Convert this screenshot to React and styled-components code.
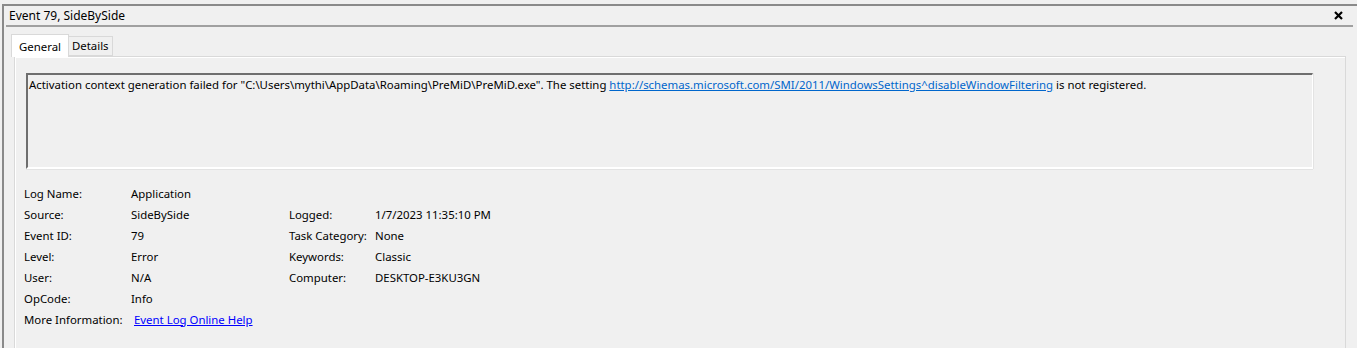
import React from "react";
import styled, { createGlobalStyle } from "styled-components";

const Global = createGlobalStyle`
  html, body {
    margin: 0;
    padding: 0;
    background: #f0f0f0;
    overflow: hidden;
  }
  body {
    font-family: "Segoe UI", "Noto Sans", "Liberation Sans", sans-serif;
    font-size: 11.4px;
    color: #000;
  }
`;

const Screen = styled.div`
  width: 1357px;
  height: 348px;
  padding: 4px 0 0 2px;
  box-sizing: border-box;
  background: #f0f0f0;
`;

const Window = styled.div`
  height: 100%;
  border-top: 2px solid #8a8a8a;
  border-left: 2px solid #8a8a8a;
  box-sizing: border-box;
`;

const TitleBar = styled.div`
  display: flex;
  align-items: center;
  justify-content: space-between;
  height: 19px;
  margin: 0 4px 0 2px;
  padding: 0 10px 0 3px;
  border-bottom: 2px solid #a0a0a0;
`;

const Title = styled.span`
  line-height: 16px;
  font-size: 12px;
`;

const Close = styled.svg`
  width: 9px;
  height: 9px;
`;

const Tabs = styled.div`
  display: flex;
  align-items: flex-end;
  height: 29px;
  padding-left: 7px;
`;

const Tab = styled.div`
  position: relative;
  height: ${(p) => (p.$active ? "23px" : "20px")};
  padding: ${(p) => (p.$active ? "1px 7px 0" : "0 3px")};
  margin-right: ${(p) => (p.$active ? "-1px" : "0")};
  display: flex;
  align-items: center;
  box-sizing: border-box;
  background: ${(p) => (p.$active ? "#fff" : "#f0f0f0")};
  border: 1px solid #d9d9d9;
  border-bottom: ${(p) => (p.$active ? "none" : "1px solid #d9d9d9")};
  z-index: ${(p) => (p.$active ? 1 : 0)};
  margin-bottom: ${(p) => (p.$active ? "-1px" : "0")};
  line-height: 16px;
`;

const Panel = styled.div`
  margin: 0 11px 0 10px;
  height: 300px;
  border: 1px solid #d9d9d9;
  box-shadow: inset 1px 1px 0 #fff;
  padding: 16px 0 0 0;
  box-sizing: border-box;
`;

const Description = styled.div`
  margin: 0 32px 0 11px;
  height: 96px;
  box-sizing: border-box;
  border-top: 2px solid #6e6e6e;
  border-left: 2px solid #6e6e6e;
  border-right: 1px solid #fff;
  border-bottom: 2px solid #fff;
  box-shadow: 0 1px 0 #e3e3e3, 1px 0 0 #e3e3e3;
  padding: 2px 1px;
  line-height: 16px;
`;

const TextLink = styled.a`
  color: #0066cc;
  text-decoration: underline;
`;

const Props = styled.div`
  display: grid;
  grid-template-columns: 107px 158px 86px auto;
  grid-auto-rows: 21px;
  align-items: center;
  margin: 14px 0 0 9px;
  line-height: 16px;
`;

const Label = styled.div`
  white-space: nowrap;
`;

const Value = styled.div`
  white-space: nowrap;
`;

const HelpLink = styled.a`
  color: #0000ff;
  text-decoration: underline;
  margin-left: 3px;
`;

const rows = [
  ["Log Name:", "Application"],
  ["Source:", "SideBySide", "Logged:", "1/7/2023 11:35:10 PM"],
  ["Event ID:", "79", "Task Category:", "None"],
  ["Level:", "Error", "Keywords:", "Classic"],
  ["User:", "N/A", "Computer:", "DESKTOP-E3KU3GN"],
  ["OpCode:", "Info"],
];

export default function App() {
  return (
    <>
      <Global />
      <Screen>
        <Window>
          <TitleBar>
            <Title>Event 79, SideBySide</Title>
            <Close viewBox="0 0 9 9">
              <path d="M1 1 L8 8 M8 1 L1 8" stroke="#000" strokeWidth="2.2" />
            </Close>
          </TitleBar>
          <Tabs>
            <Tab $active>General</Tab>
            <Tab>Details</Tab>
          </Tabs>
          <Panel>
            <Description>
              Activation context generation failed for "C:\Users\mythi\AppData\Roaming\PreMiD\PreMiD.exe". The setting{" "}
              <TextLink href="#">http://schemas.microsoft.com/SMI/2011/WindowsSettings^disableWindowFiltering</TextLink>{" "}
              is not registered.
            </Description>
            <Props>
              {rows.map((r, i) => (
                <React.Fragment key={i}>
                  <Label>{r[0]}</Label>
                  <Value>{r[1]}</Value>
                  <Label>{r[2] || ""}</Label>
                  <Value>{r[3] || ""}</Value>
                </React.Fragment>
              ))}
              <Label>More Information:</Label>
              <Value>
                <HelpLink href="#">Event Log Online Help</HelpLink>
              </Value>
            </Props>
          </Panel>
        </Window>
      </Screen>
    </>
  );
}
